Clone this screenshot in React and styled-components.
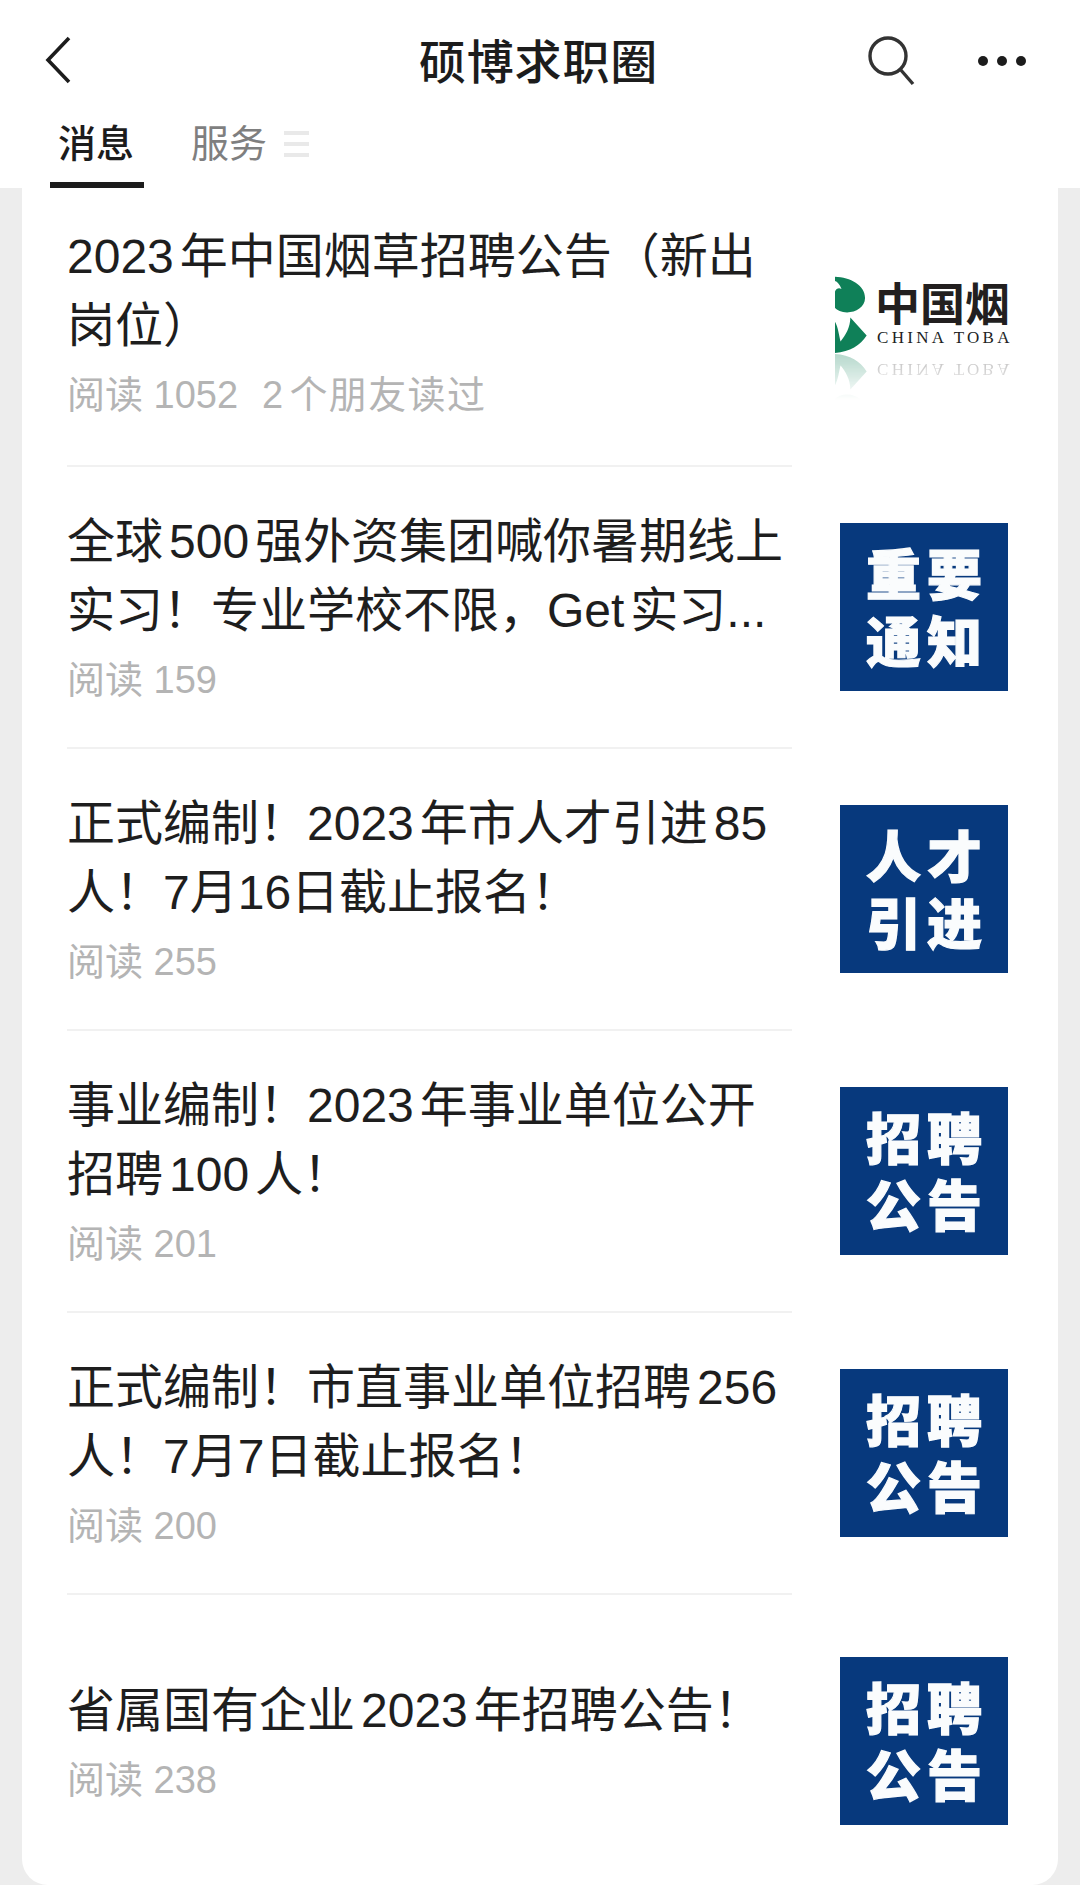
import React from "react";
import styled, { createGlobalStyle } from "styled-components";

const GlobalStyle = createGlobalStyle`
  html, body {
    margin: 0;
    padding: 0;
    background: #ededed;
  }
  * {
    box-sizing: border-box;
  }
  body {
    font-family: "Liberation Sans", "Noto Sans CJK SC", sans-serif;
    text-autospace: normal;
  }
`;

const Page = styled.div`
  width: 1080px;
  height: 1885px;
  overflow: hidden;
  background: #ededed;
`;

const Header = styled.header`
  height: 188px;
  background: #fff;
`;

const TopBar = styled.div`
  height: 122px;
  padding: 36px 53px 0 45px;
  display: grid;
  grid-template-columns: 1fr auto 1fr;
  align-items: start;
`;

const PageTitle = styled.h1`
  margin: 0;
  padding: 1px 0 0 5px;
  text-align: center;
  font-size: 47px;
  line-height: 52px;
  letter-spacing: 0.8px;
  font-weight: 500;
  color: #1c1c1c;
`;

const TopActions = styled.div`
  display: flex;
  justify-content: flex-end;
  gap: 60px;
`;

const Tabs = styled.nav`
  height: 66px;
  padding-left: 50px;
  display: flex;
  gap: 47px;
`;

const Tab = styled.div`
  display: flex;
  align-items: flex-start;
  gap: 17px;
  height: 66px;
  width: ${(p) => (p.$active ? "94px" : "auto")};
  padding-left: ${(p) => (p.$active ? "8px" : "0")};
  border-bottom: ${(p) => (p.$active ? "6px solid #1c1c1c" : "none")};
  font-size: 38px;
  line-height: 44px;
  font-weight: ${(p) => (p.$active ? 500 : 400)};
  color: ${(p) => (p.$active ? "#1c1c1c" : "#7f7f7f")};
`;

const MenuLines = styled.span`
  margin-top: 9px;
  width: 25px;
  height: 26px;
  display: flex;
  flex-direction: column;
  justify-content: space-between;

  i {
    display: block;
    height: 4px;
    background: #e9e9e9;
  }
`;

const Card = styled.main`
  margin: 0 22px;
  height: 1697px;
  padding: 0 50px 0 45px;
  background: #fff;
  border-radius: 0 0 26px 26px;
`;

const Item = styled.article`
  display: flex;
  align-items: center;
  justify-content: space-between;
`;

const ItemText = styled.div`
  width: 725px;
  padding: ${(p) => p.$pad};
  border-bottom: ${(p) => (p.$last ? "none" : "2px solid #f1f1f1")};
`;

const ItemTitle = styled.div`
  font-size: 48px;
  line-height: 69px;
  color: #1e1e1e;
  white-space: nowrap;
`;

const Tight = styled.span`
  text-autospace: no-autospace;
`;

const ItemMeta = styled.div`
  font-size: 38px;
  line-height: 70px;
  color: #b4b4b4;
  white-space: nowrap;
  display: flex;
  gap: 24px;

  span + span {
    letter-spacing: 1.4px;
  }
`;

const Cover = styled.div`
  width: 168px;
  height: 168px;
  flex: none;
  margin-bottom: ${(p) => (p.$last ? "0" : "3px")};
  padding: 15px 0 0 6px;
  background: #07397d;
  color: #fafcfd;
  font-family: "Noto Sans CJK SC", sans-serif;
  font-size: 55px;
  line-height: 67px;
  font-weight: 900;
  letter-spacing: 6px;
  text-align: center;
  -webkit-text-stroke: 1.2px #fafcfd;
`;

const LogoCover = styled.div`
  width: 184px;
  height: 168px;
  flex: none;
  margin: 0 -11px 0 -5px;
  padding-top: 32px;
  overflow: hidden;
`;

const LogoRow = styled.div`
  display: flex;
  height: 77px;
  gap: 8px;

  svg {
    flex: none;
  }
`;

const LogoMirror = styled(LogoRow)`
  margin-top: 1px;
  transform: scaleY(-1);
  opacity: 0.3;
  mask-image: linear-gradient(to top, #000, transparent 60%);
`;

const LogoWords = styled.div`
  color: #221f1f;
`;

const LogoHan = styled.div`
  height: 52px;
  font-family: "Noto Sans CJK SC", sans-serif;
  font-size: 45px;
  line-height: 52px;
  font-weight: 700;
  white-space: nowrap;
`;

const LogoLatin = styled.div`
  margin-left: 2px;
  font-family: "Liberation Serif", serif;
  font-size: 17px;
  line-height: 19px;
  letter-spacing: 3.3px;
  white-space: nowrap;
`;

const items = [
  {
    lines: ["2023年中国烟草招聘公告（新出", "岗位）"],
    meta: ["阅读 1052", "2个朋友读过"],
    logo: true,
    pad: "34px 0 35px 0",
  },
  {
    lines: ["全球500强外资集团喊你暑期线上", "实习！专业学校不限，Get实习..."],
    meta: ["阅读 159"],
    cover: ["重要", "通知"],
    pad: "40px 0 32px 0",
  },
  {
    lines: [
      "正式编制！2023年市人才引进85",
      <Tight>人！7月16日截止报名！</Tight>,
    ],
    meta: ["阅读 255"],
    cover: ["人才", "引进"],
    pad: "40px 0 32px 0",
  },
  {
    lines: ["事业编制！2023年事业单位公开", "招聘100人！"],
    meta: ["阅读 201"],
    cover: ["招聘", "公告"],
    pad: "40px 0 32px 0",
  },
  {
    lines: [
      "正式编制！市直事业单位招聘256",
      <Tight>人！7月7日截止报名！</Tight>,
    ],
    meta: ["阅读 200"],
    cover: ["招聘", "公告"],
    pad: "40px 0 32px 0",
  },
  {
    lines: ["省属国有企业2023年招聘公告！"],
    meta: ["阅读 238"],
    cover: ["招聘", "公告"],
    pad: "81px 0 71px 0",
    last: true,
  },
];

const BackIcon = () => (
  <svg width="26" height="48" viewBox="0 0 26 48" fill="none">
    <path d="M24 2 L3 24 L24 46" stroke="#1c1c1c" strokeWidth="3.6" />
  </svg>
);

const SearchIcon = () => (
  <svg width="50" height="50" viewBox="0 0 50 50" fill="none" stroke="#333" strokeWidth="3.4">
    <circle cx="21" cy="20" r="18" />
    <path d="M33 33 L46 48" />
  </svg>
);

const MoreIcon = () => (
  <svg width="50" height="50" viewBox="0 0 50 50" fill="#1c1c1c">
    <circle cx="6" cy="25" r="5" />
    <circle cx="25" cy="25" r="5" />
    <circle cx="44" cy="25" r="5" />
  </svg>
);

const LeafMark = () => (
  <svg width="32" height="78" viewBox="168 105 98 234" fill="#0f8058">
    <path d="M168 105 C215 107 260 130 260 170 C260 198 232 214 205 214 C188 214 174 208 168 200 L168 150 C172 140 180 138 188 142 C182 128 175 120 168 118 Z" />
    <path d="M168 338 C215 335 245 315 265 285 L215 230 C215 260 200 285 185 303 C180 285 178 260 168 243 Z" />
  </svg>
);

const Logo = () => (
  <LogoCover>
    <LogoRow>
      <LeafMark />
      <LogoWords>
        <LogoHan>中国烟</LogoHan>
        <LogoLatin>CHINA TOBA</LogoLatin>
      </LogoWords>
    </LogoRow>
    <LogoMirror>
      <LeafMark />
      <LogoWords>
        <LogoHan />
        <LogoLatin>CHINA TOBA</LogoLatin>
      </LogoWords>
    </LogoMirror>
  </LogoCover>
);

export default function App() {
  return (
    <Page>
      <GlobalStyle />
      <Header>
        <TopBar>
          <BackIcon />
          <PageTitle>硕博求职圈</PageTitle>
          <TopActions>
            <SearchIcon />
            <MoreIcon />
          </TopActions>
        </TopBar>
        <Tabs>
          <Tab $active>消息</Tab>
          <Tab>
            服务
            <MenuLines>
              <i />
              <i />
              <i />
            </MenuLines>
          </Tab>
        </Tabs>
      </Header>
      <Card>
        {items.map((item, index) => (
          <Item key={index}>
            <ItemText $pad={item.pad} $last={item.last}>
              {item.lines.map((line, i) => (
                <ItemTitle key={i}>{line}</ItemTitle>
              ))}
              <ItemMeta>
                {item.meta.map((m) => (
                  <span key={m}>{m}</span>
                ))}
              </ItemMeta>
            </ItemText>
            {item.logo ? (
              <Logo />
            ) : (
              <Cover $last={item.last}>
                {item.cover.map((c) => (
                  <div key={c}>{c}</div>
                ))}
              </Cover>
            )}
          </Item>
        ))}
      </Card>
    </Page>
  );
}
